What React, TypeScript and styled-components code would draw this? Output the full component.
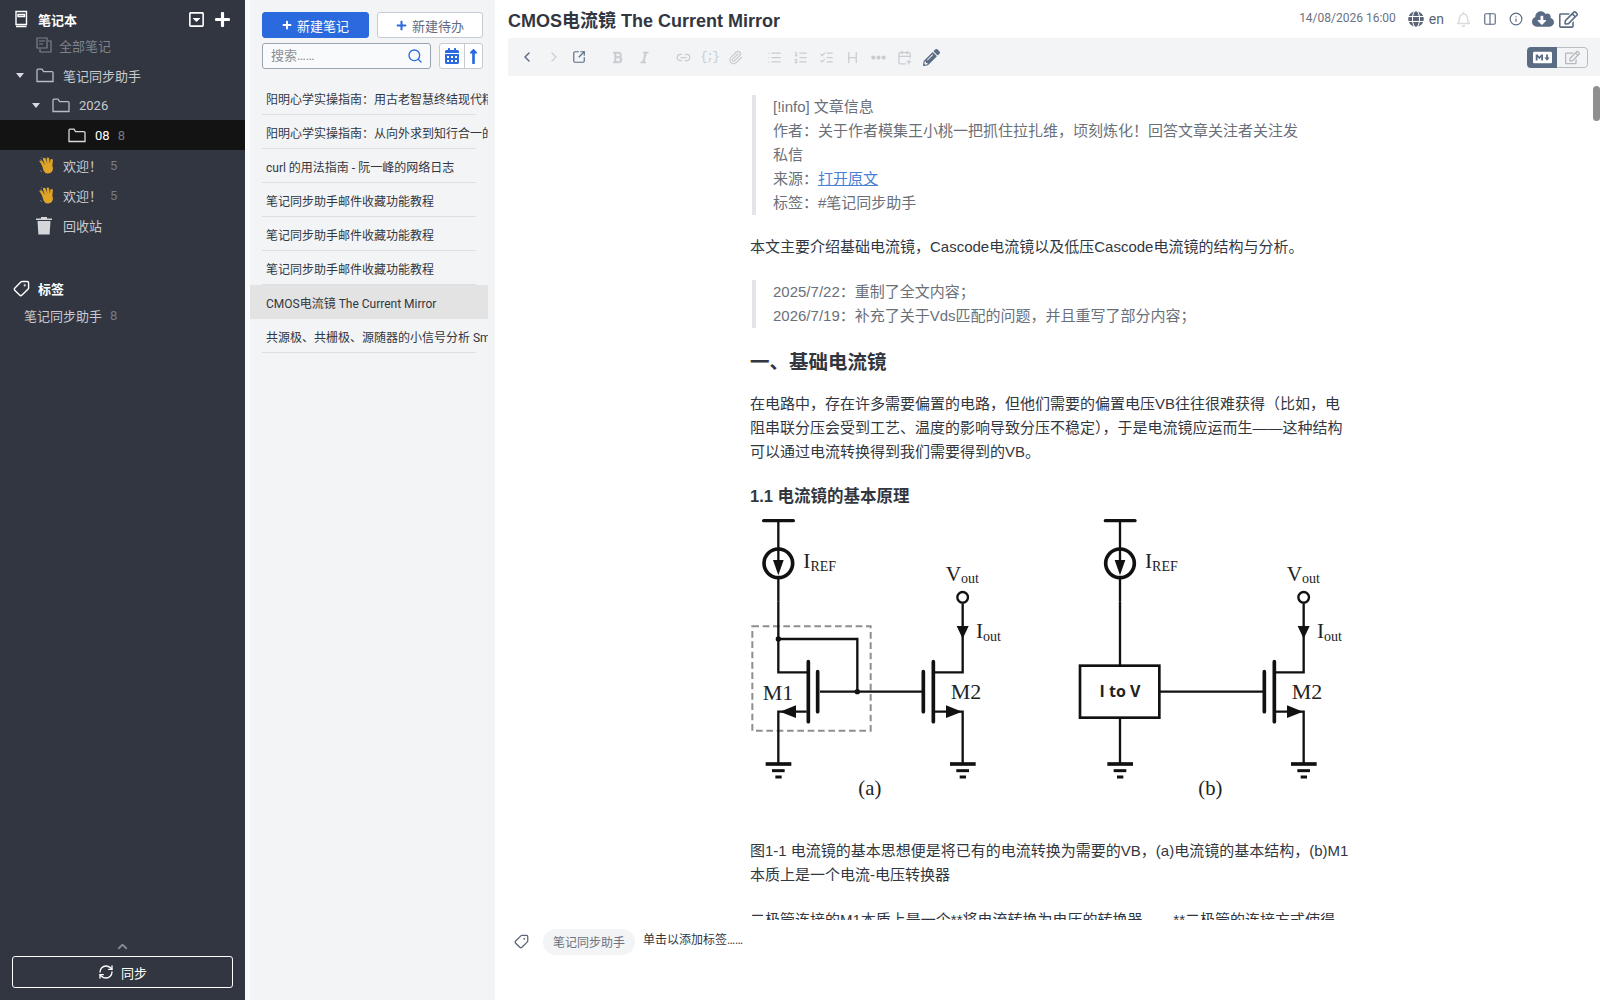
import React, { FC } from 'react';
import styled, { createGlobalStyle } from 'styled-components';
import {
  FaBold, FaItalic, FaCalendarAlt, FaCloudDownloadAlt, FaEllipsisH, FaGlobe, FaLongArrowAltUp,
  FaMarkdown, FaPencilAlt, FaPlus, FaRegBell, FaRegCaretSquareDown, FaRegEdit,
} from 'react-icons/fa';
import {
  CalendarPlus, ChevronLeft, ChevronRight, ChevronUp, Columns2, Heading, Info, Link2, List, ListChecks,
  ListOrdered, Paperclip, RefreshCw, Search, SquareArrowOutUpRight, Tag,
} from 'lucide-react';

const UI_FONT = '"Roboto", "Noto Sans CJK SC", sans-serif';
const DOC_FONT = '"Liberation Sans", "Noto Sans CJK SC", sans-serif';

const GlobalStyle = createGlobalStyle`
  html, body { margin: 0; padding: 0; height: 100%; overflow: hidden; background: #fff; }
  #root { height: 100%; }
  * { box-sizing: border-box; }
`;

const Page = styled.div`
  display: flex;
  width: 1600px;
  height: 1000px;
  overflow: hidden;
  font-family: ${UI_FONT};
`;

/* ---------- sidebar ---------- */

const Sidebar = styled.aside`
  width: 245px;
  flex: none;
  display: flex;
  flex-direction: column;
  background: #313640;
  color: #c9cbd0;
  font-size: 13px;
`;

const SidebarHead = styled.div<{ $mt?: number }>`
  display: flex;
  align-items: center;
  height: 22px;
  margin-top: ${p => p.$mt || 0}px;
  padding: 0 14px 0 13px;
  color: #fff;
  font-weight: 700;
  svg { flex: none; }
`;

const HeadTitle = styled.span`
  margin-left: 8px;
  flex: 1;
`;

const HeadActions = styled.div`
  display: flex;
  align-items: center;
  gap: 9px;
  color: #fff;
`;

const TagIcon = styled(Tag)`
  flex: none;
  transform: rotate(90deg);
`;

const TreeRow = styled.div<{ $indent: number; $active?: boolean; $muted?: boolean }>`
  display: flex;
  align-items: center;
  height: 30px;
  padding-left: ${p => p.$indent}px;
  background: ${p => (p.$active ? '#131313' : 'transparent')};
  color: ${p => (p.$active ? '#fff' : p.$muted ? '#7f828a' : '#c9cbd0')};
`;

const TagRow = styled(TreeRow)`
  height: 30px;
  margin-top: 1px;
`;

const Caret = styled.span`
  flex: none;
  width: 0;
  height: 0;
  margin-right: 12px;
  border-left: 4px solid transparent;
  border-right: 4px solid transparent;
  border-top: 5px solid #d8dade;
`;

const IconSlot = styled.span<{ $w: number }>`
  flex: none;
  display: inline-flex;
  align-items: center;
  width: ${p => p.$w}px;
`;

const Count = styled.span<{ $ml: number }>`
  margin-left: ${p => p.$ml}px;
  color: #777a82;
  font-size: 13px;
`;

const SidebarFoot = styled.div`
  margin-top: auto;
  padding: 0 12px 12px;
  display: flex;
  flex-direction: column;
  align-items: center;
  color: #8a8d94;
`;

const SyncButton = styled.button`
  width: 221px;
  height: 32px;
  margin-top: 2px;
  display: flex;
  align-items: center;
  justify-content: center;
  gap: 7px;
  background: transparent;
  border: 1px solid #fff;
  border-radius: 3px;
  color: #fff;
  font: 13px ${UI_FONT};
`;

/* ---------- note list ---------- */

const NoteList = styled.section`
  width: 250px;
  flex: none;
  padding-left: 5px;
  background: linear-gradient(to right, #f9fafb 5px, #f3f4f6 5px);
  color: #32373f;
`;

const ListTools = styled.div`
  display: grid;
  grid-template-columns: 169px 44px;
  column-gap: 8px;
  row-gap: 5px;
  padding: 12px 0 0 12px;
`;

const TopButtons = styled.div`
  grid-column: 1 / 3;
  display: flex;
  justify-content: space-between;
`;

const NewButton = styled.button<{ $primary?: boolean }>`
  width: ${p => (p.$primary ? 107 : 106)}px;
  height: 26px;
  display: flex;
  align-items: center;
  justify-content: center;
  gap: 5px;
  border-radius: 3px;
  border: 1px solid ${p => (p.$primary ? '#2b6ade' : '#c6cad2')};
  background: ${p => (p.$primary ? '#2b6ade' : '#fff')};
  color: ${p => (p.$primary ? '#fff' : '#2b6ade')};
  font: 13px ${UI_FONT};
  span { color: ${p => (p.$primary ? '#fff' : '#5f6b80')}; }
`;

const SearchBox = styled.div`
  height: 26px;
  display: flex;
  align-items: center;
  justify-content: space-between;
  padding: 0 7px 3px 8px;
  border: 1px solid #9aa3b2;
  border-radius: 3px;
  background: #f9fafb;
  color: #8a8e96;
  font-size: 13px;
  svg { color: #2b6ade; margin-top: 3px; }
`;

const SortGroup = styled.div`
  height: 26px;
  display: flex;
  border: 1px solid #c6cad2;
  border-radius: 3px;
  background: #fff;
  color: #2b6ade;
`;

const SortCell = styled.span<{ $w: number; $divider?: boolean }>`
  width: ${p => p.$w}px;
  display: flex;
  align-items: center;
  justify-content: center;
  border-left: ${p => (p.$divider ? '1px solid #c6cad2' : 'none')};
`;

const Notes = styled.div`
  margin-top: 12px;
  width: 238px;
  overflow: hidden;
`;

const NoteRow = styled.div<{ $active?: boolean }>`
  height: 34px;
  position: relative;
  padding-left: 16px;
  line-height: 39px;
  font-size: 12px;
  white-space: nowrap;
  overflow: hidden;
  background: ${p => (p.$active ? '#e3e3e3' : 'transparent')};
  &:after {
    content: '';
    position: absolute;
    left: 12px;
    width: 214px;
    bottom: 0;
    border-bottom: 1px solid ${p => (p.$active ? 'transparent' : '#dcdfe3')};
  }
`;

/* ---------- editor ---------- */

const Editor = styled.main`
  flex: 1;
  min-width: 0;
  position: relative;
  display: flex;
  flex-direction: column;
  padding-left: 13px;
  background: #fff;
`;

const TitleBar = styled.header`
  height: 38px;
  display: flex;
  align-items: center;
  padding: 0 22px 0 0;
  color: #5a6474;
`;

const Title = styled.h1`
  flex: 1;
  margin: 0;
  color: #32373f;
  font: 700 18px ${DOC_FONT};
`;

const Stamp = styled.span`
  margin-right: 12px;
  padding-bottom: 2px;
  font-size: 12px;
  color: #6b7280;
`;

const TitleIcons = styled.div`
  display: flex;
  align-items: center;
  gap: 12px;
  color: #5a6b84;
`;

const Lang = styled.span`
  display: inline-flex;
  align-items: center;
  gap: 5px;
  font-size: 14px;
  color: #5a6474;
`;

const Toolbar = styled.div`
  height: 38px;
  display: flex;
  align-items: center;
  padding: 0 12px 0 11px;
  background: #f3f4f6;
`;

const ToolGroup = styled.div<{ $gap: number; $ml?: number; $faint?: boolean }>`
  display: flex;
  align-items: center;
  gap: ${p => p.$gap}px;
  margin-left: ${p => p.$ml || 0}px;
  color: ${p => (p.$faint ? '#c9ccd1' : '#5a6b84')};
`;

const ToolSlot = styled.span`
  display: inline-flex;
  width: 15px;
  justify-content: center;
  letter-spacing: -1px;
  font: 12px "Liberation Mono", monospace;
`;

const ViewToggle = styled.div`
  margin-left: auto;
  display: flex;
  height: 21px;
  border-radius: 4px;
  overflow: hidden;
`;

const ToggleCell = styled.span<{ $on?: boolean }>`
  width: ${p => (p.$on ? 30 : 31)}px;
  display: flex;
  align-items: center;
  justify-content: center;
  background: ${p => (p.$on ? '#5a6b84' : 'transparent')};
  color: ${p => (p.$on ? '#fff' : '#b4b7bd')};
  border: ${p => (p.$on ? 'none' : '1px solid #b9bcc2')};
  border-left: none;
  border-radius: ${p => (p.$on ? '0' : '0 4px 4px 0')};
`;

const Viewer = styled.div`
  height: 844px;
  overflow: hidden;
`;

const Article = styled.article`
  width: 600px;
  margin-left: 242px;
  padding-top: 19px;
  color: #32373f;
  font: 15px/24px ${DOC_FONT};
`;

const Quote = styled.blockquote`
  margin: 0 0 20px 2px;
  padding: 0 0 0 17px;
  border-left: 4px solid #e3e5e8;
  color: #6a7079;
`;

const DocLink = styled.a`
  color: #4a7fd6;
  text-decoration: underline;
`;

const Para = styled.p<{ $mb?: number }>`
  margin: 0 0 ${p => (p.$mb === undefined ? 21 : p.$mb)}px;
`;

const H2 = styled.h2`
  margin: 0 0 16px;
  font: 700 19.5px/28px ${DOC_FONT};
`;

const H3 = styled.h3`
  margin: 0 0 1px;
  font: 700 16.5px/26px ${DOC_FONT};
`;

const Figure = styled.svg`
  display: block;
  margin: 0 0 39px -10px;
  width: 620px;
  height: 290px;
`;

const TagBar = styled.div`
  display: flex;
  align-items: center;
  height: 27px;
  margin-top: 8px;
  padding-left: 6px;
  color: #32373f;
  font-size: 12px;
`;

const Chip = styled.span`
  margin: 0 8px 0 14px;
  width: 92px;
  height: 26px;
  display: flex;
  align-items: center;
  justify-content: center;
  border-radius: 13px;
  background: #f3f4f6;
  color: #6b7280;
`;

const TagHint = styled.span`
  padding-bottom: 6px;
`;

const ScrollThumb = styled.div`
  position: absolute;
  top: 86px;
  right: 0;
  width: 7px;
  height: 35px;
  border-radius: 4px;
  background: #8f8f8f;
`;

/* ---------- drawn icons ---------- */

const BookIcon: FC = () => (
  <svg width="17" height="18" viewBox="0 0 17 18" fill="none" stroke="#fff" strokeWidth="1.4">
    <path d="M3 1.5h10.5v13H3zM3 16.5h10.5M5 4.5h6.5v2H5z" />
  </svg>
);

const AllNotesIcon: FC = () => (
  <svg width="16" height="16" viewBox="0 0 16 16" fill="none" stroke="#7f828a" strokeWidth="1.2">
    <path d="M1 1h10v10H1zM3 4h6M3 7h4M12 4h3v11H4v-3" />
  </svg>
);

const FolderIcon: FC<{ color?: string }> = ({ color = '#b9bcc2' }) => (
  <svg width="18" height="15" viewBox="0 0 18 15" fill="none" stroke={color} strokeWidth="1.3">
    <path d="M1 13.5V2.2Q1 1.2 2 1.2h4l1.6 2.4H16q1 0 1 1v8.9z" />
  </svg>
);

const WaveIcon: FC = () => (
  <svg width="17" height="18" viewBox="0 0 17 18">
    <g fill="#e0a526">
      <rect x="3.4" y="3.8" width="2.6" height="9" rx="1.3" transform="rotate(-30 5 8)" />
      <rect x="6" y="1.6" width="2.6" height="9" rx="1.3" transform="rotate(-20 7 6)" />
      <rect x="9" y="1.4" width="2.6" height="9" rx="1.3" transform="rotate(-8 10 6)" />
      <rect x="12" y="3" width="2.6" height="9" rx="1.3" transform="rotate(6 13 7)" />
      <path d="M4 9l9-2 2 5q0 5-5 5.5-3 .3-4.5-3z" />
    </g>
    <path d="M1 6l2-3M3 2l1-1M2 14l2 2" stroke="#6d6f75" fill="none" />
  </svg>
);

const TrashIcon: FC = () => (
  <svg width="16" height="19" viewBox="0 0 16 19">
    <path d="M0 2.5h16v1.4H0zM5 1h6v1.5H5z" fill="#d4d6da" />
    <path d="M1.5 5h13l-.9 13.5H2.4z" fill="#d4d6da" />
  </svg>
);

const Ground: FC<{ x: number }> = ({ x }) => (
  <g stroke="#111">
    <path d={`M${x - 38} 762h77`} strokeWidth="11" />
    <path d={`M${x - 19} 782h38`} strokeWidth="9" />
    <path d={`M${x - 9} 801h19`} strokeWidth="9" />
  </g>
);

const Supply: FC<{ x: number }> = ({ x }) => (
  <g stroke="#111" fill="none">
    <path d={`M${x - 44} 32h89`} strokeWidth="10" strokeLinecap="round" />
    <path d={`M${x} 32v84M${x} 205v70`} strokeWidth="7" />
    <circle cx={x} cy={160} r="43" strokeWidth="11" />
    <path d={`M${x} 116v40`} strokeWidth="7" />
    <path d={`M${x - 16} 150h32l-16 46z`} fill="#111" stroke="none" />
  </g>
);

const OutputStage: FC<{ x: number }> = ({ x }) => (
  <g>
    <g stroke="#111" fill="none">
      <path d={`M${x - 118} 485v120M${x - 88} 455v180`} strokeWidth="11" strokeLinecap="round" />
      <path d={`M${x - 84} 487h84V280M${x - 84} 605h84v155`} strokeWidth="7" />
      <circle cx={x} cy={262} r="16" strokeWidth="7" fill="#fff" />
    </g>
    <path d={`M${x - 18} 348h36l-18 38z`} fill="#111" />
    <path d={`M${x - 50} 586l48 19-48 19z`} fill="#111" />
    <Ground x={x} />
    <text x={x - 51} y={212} fontSize="64">V<tspan fontSize="42" dy="8">out</tspan></text>
    <text x={x + 40} y={385} fontSize="64">I<tspan fontSize="42" dy="8">out</tspan></text>
    <text x={x - 36} y={568} fontSize="66">M2</text>
  </g>
);

const CircuitFigure: FC = () => (
  <Figure viewBox="0 0 1860 870" fontFamily='"Liberation Serif", serif' fill="#222">
    <g>
      <Supply x={115} />
      <rect x="37" y="349" width="355" height="313" fill="none" stroke="#8e8e8e" strokeWidth="6" strokeDasharray="20 11" />
      <g stroke="#111" fill="none">
        <path d="M115 275v212h86M115 387h237v158M240 545h310" strokeWidth="7" />
        <path d="M205 455v180M233 485v120" strokeWidth="11" strokeLinecap="round" />
        <path d="M200 605h-85v155" strokeWidth="7" />
      </g>
      <circle cx="115" cy="387" r="8" fill="#111" />
      <circle cx="352" cy="545" r="8" fill="#111" />
      <path d="M120 605l48-19v38z" fill="#111" />
      <Ground x={115} />
      <text x="190" y="175" fontSize="64">I<tspan fontSize="42" dy="8">REF</tspan></text>
      <text x="68" y="570" fontSize="66">M1</text>
      <OutputStage x={668} />
      <text x="355" y="855" fontSize="62">(a)</text>
    </g>
    <g transform="translate(960 0)">
      <Supply x={180} />
      <g stroke="#111" fill="none">
        <rect x="60" y="467" width="238" height="156" strokeWidth="8" />
        <path d="M180 275v192M180 623v137M300 545h310" strokeWidth="7" />
      </g>
      <text x="180" y="561" fontSize="48" fontWeight="700" textAnchor="middle" fontFamily='"Open Sans", sans-serif'>I to V</text>
      <Ground x={180} />
      <text x="255" y="175" fontSize="64">I<tspan fontSize="42" dy="8">REF</tspan></text>
      <OutputStage x={731} />
      <text x="415" y="855" fontSize="62">(b)</text>
    </g>
  </Figure>
);

const notes = [
  '阳明心学实操指南：用古老智慧终结现代精神内耗',
  '阳明心学实操指南：从向外求到知行合一的转变',
  'curl 的用法指南 - 阮一峰的网络日志',
  '笔记同步助手邮件收藏功能教程',
  '笔记同步助手邮件收藏功能教程',
  '笔记同步助手邮件收藏功能教程',
  'CMOS电流镜 The Current Mirror',
  '共源极、共栅极、源随器的小信号分析 Small Signal',
];

const App: FC = () => (
  <Page>
    <GlobalStyle />
    <Sidebar>
      <SidebarHead $mt={8}>
        <BookIcon />
        <HeadTitle>笔记本</HeadTitle>
        <HeadActions>
          <FaRegCaretSquareDown size={17} />
          <FaPlus size={17} />
        </HeadActions>
      </SidebarHead>
      <TreeRow $indent={36} $muted>
        <IconSlot $w={23}><AllNotesIcon /></IconSlot>全部笔记
      </TreeRow>
      <TreeRow $indent={16}>
        <Caret /><IconSlot $w={27}><FolderIcon /></IconSlot>笔记同步助手
      </TreeRow>
      <TreeRow $indent={32}>
        <Caret /><IconSlot $w={27}><FolderIcon /></IconSlot>2026
      </TreeRow>
      <TreeRow $indent={68} $active>
        <IconSlot $w={27}><FolderIcon color="#d8dade" /></IconSlot>08<Count $ml={8}>8</Count>
      </TreeRow>
      <TreeRow $indent={38}>
        <IconSlot $w={25}><WaveIcon /></IconSlot>欢迎！<Count $ml={8}>5</Count>
      </TreeRow>
      <TreeRow $indent={38}>
        <IconSlot $w={25}><WaveIcon /></IconSlot>欢迎！<Count $ml={8}>5</Count>
      </TreeRow>
      <TreeRow $indent={36}>
        <IconSlot $w={27}><TrashIcon /></IconSlot>回收站
      </TreeRow>
      <SidebarHead $mt={37}>
        <TagIcon size={17} color="#fff" />
        <HeadTitle>标签</HeadTitle>
      </SidebarHead>
      <TagRow $indent={24}>
        笔记同步助手<Count $ml={8}>8</Count>
      </TagRow>
      <SidebarFoot>
        <ChevronUp size={15} strokeWidth={3} />
        <SyncButton><RefreshCw size={16} />同步</SyncButton>
      </SidebarFoot>
    </Sidebar>

    <NoteList>
      <ListTools>
        <TopButtons>
          <NewButton $primary><FaPlus size={10} /><span>新建笔记</span></NewButton>
          <NewButton><FaPlus size={11} /><span>新建待办</span></NewButton>
        </TopButtons>
        <SearchBox>搜索……<Search size={16} strokeWidth={2} /></SearchBox>
        <SortGroup>
          <SortCell $w={25}><FaCalendarAlt size={16} /></SortCell>
          <SortCell $w={18} $divider><FaLongArrowAltUp size={17} /></SortCell>
        </SortGroup>
      </ListTools>
      <Notes>
        {notes.map((n, i) => <NoteRow key={i} $active={i === 6}>{n}</NoteRow>)}
      </Notes>
    </NoteList>

    <Editor>
      <TitleBar>
        <Title>CMOS电流镜 The Current Mirror</Title>
        <Stamp>14/08/2026 16:00</Stamp>
        <TitleIcons>
          <Lang><FaGlobe size={16} />en</Lang>
          <FaRegBell size={15} color="#d9dbde" />
          <Columns2 size={14} />
          <Info size={14} />
          <FaCloudDownloadAlt size={22} style={{ marginLeft: -3 }} />
          <FaRegEdit size={19} style={{ marginLeft: -7 }} />
        </TitleIcons>
      </TitleBar>
      <Toolbar>
        <ToolGroup $gap={10.5}>
          <ChevronLeft size={16} strokeWidth={2.2} />
          <ChevronRight size={16} color="#cdd0d5" />
          <SquareArrowOutUpRight size={14} />
        </ToolGroup>
        <ToolGroup $gap={14} $ml={25} $faint>
          <FaBold size={13} />
          <FaItalic size={13} />
        </ToolGroup>
        <ToolGroup $gap={11} $ml={25} $faint>
          <Link2 size={15} />
          <ToolSlot>{'{;}'}</ToolSlot>
          <Paperclip size={15} />
        </ToolGroup>
        <ToolGroup $gap={11} $ml={24} $faint>
          <List size={15} />
          <ListOrdered size={15} />
          <ListChecks size={15} />
          <Heading size={15} />
          <FaEllipsisH size={15} />
          <CalendarPlus size={15} />
          <FaPencilAlt size={17} color="#5a6b84" />
        </ToolGroup>
        <ViewToggle>
          <ToggleCell $on><FaMarkdown size={19} /></ToggleCell>
          <ToggleCell><FaRegEdit size={15} /></ToggleCell>
        </ViewToggle>
      </Toolbar>
      <Viewer>
        <Article>
          <Quote>
            [!info] 文章信息<br />
            作者：关于作者模集王小桃一把抓住拉扎维，顷刻炼化！回答文章关注者关注发<br />
            私信<br />
            来源：<DocLink>打开原文</DocLink><br />
            标签：#笔记同步助手
          </Quote>
          <Para>本文主要介绍基础电流镜，Cascode电流镜以及低压Cascode电流镜的结构与分析。</Para>
          <Quote>
            2025/7/22：重制了全文内容；<br />
            2026/7/19：补充了关于Vds匹配的问题，并且重写了部分内容；
          </Quote>
          <H2>一、基础电流镜</H2>
          <Para $mb={19}>在电路中，存在许多需要偏置的电路，但他们需要的偏置电压VB往往很难获得（比如，电阻串联分压会受到工艺、温度的影响导致分压不稳定），于是电流镜应运而生——这种结构可以通过电流转换得到我们需要得到的VB。</Para>
          <H3>1.1 电流镜的基本原理</H3>
          <CircuitFigure />
          <Para>图1-1 电流镜的基本思想便是将已有的电流转换为需要的VB，(a)电流镜的基本结构，(b)M1本质上是一个电流-电压转换器</Para>
          <Para>二极管连接的M1本质上是一个**将电流转换为电压的转换器。{'\u3000\u00a0\u00a0'}**二极管的连接方式使得</Para>
        </Article>
      </Viewer>
      <TagBar>
        <TagIcon size={15} color="#5a6474" />
        <Chip>笔记同步助手</Chip>
        <TagHint>单击以添加标签……</TagHint>
      </TagBar>
      <ScrollThumb />
    </Editor>
  </Page>
);

export default App;
